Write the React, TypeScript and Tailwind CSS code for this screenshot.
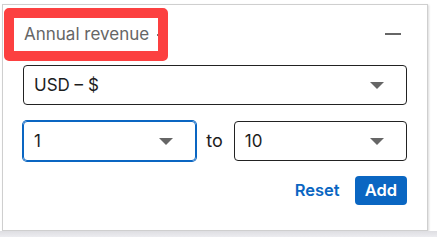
import React from "react";

function Caret() {
  return (
    <svg width="14" height="7" viewBox="0 0 14 7" className="shrink-0">
      <path d="M0 0 H14 L7 7 Z" fill="#666666" />
    </svg>
  );
}

function Select({ value, focused, className }: { value: string; focused?: boolean; className?: string }) {
  return (
    <div
      className={
        "flex h-[40px] items-center justify-between rounded-[4px] pl-[10px] pr-[22px] " +
        (focused
          ? "border border-[#0a66c2] shadow-[0_0_0_1px_#0a66c2] "
          : "border border-[#222222] ") +
        (className ?? "")
      }
    >
      <span className="text-[17px] leading-none text-[#1d1d1d]">{value}</span>
      <Caret />
    </div>
  );
}

export default function App() {
  return (
    <div
      className="relative flex h-[237px] w-[437px] flex-col overflow-hidden bg-white"
      style={{ fontFamily: "Inter, 'Liberation Sans', Arial, sans-serif" }}
    >
      <div className="flex flex-1 items-start">
        <div className="ml-[2px] mt-[4px] flex h-[227px] w-[426px] flex-col border border-[#cfcfcf] px-[20px] shadow-[1px_1px_2px_rgba(0,0,0,0.15)]">
          <div className="relative flex h-[58px] items-center justify-between">
            <span className="pl-[1px] text-[17px] leading-none text-[#666666]">Annual revenue</span>
            <span className="absolute left-[134px] top-[29px] h-[2px] w-[6px] bg-[#777777]" />
            <span className="mr-[6px] h-[2px] w-[16px] bg-[#666666]" />
          </div>
          <Select value="USD – $" className="mt-[2px] h-[39px]" />
          <div className="mt-[15px] flex h-[42px] items-center">
            <Select value="1" focused className="flex-1" />
            <span className="ml-[10px] mr-[11px] text-[18px] leading-none text-[#1d1d1d]">to</span>
            <Select value="10" className="h-[39px] flex-1" />
          </div>
          <div className="mt-[14px] flex items-center justify-end gap-[15px]">
            <span className="text-[16.5px] font-semibold leading-none text-[#0a66c2]">Reset</span>
            <span className="flex h-[29px] items-center rounded-[4px] bg-[#0a66c2] px-[10px] text-[16.5px] font-semibold leading-none text-white">
              Add
            </span>
          </div>
        </div>
      </div>
      <div className="h-[6px] w-full bg-gradient-to-b from-[#dedee2] to-[#ececf0]" />
      <div className="absolute left-[4px] top-[8px] h-[53px] w-[164px] rounded-[5px] border-[10px] border-[#fc4040]" />
    </div>
  );
}
